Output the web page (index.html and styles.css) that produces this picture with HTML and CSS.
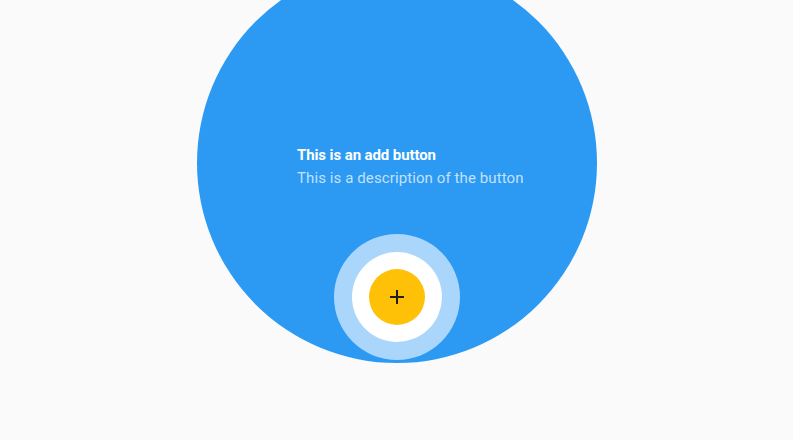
FILE: index.html
```html
<!DOCTYPE html>
<html>
<head>
<meta charset="utf-8">
<link rel="stylesheet" href="styles.css">
</head>
<body>
<div class="stage">
  <div class="backdrop"></div>
  <div class="content">
    <div class="title">This is an add button</div>
    <div class="desc">This is a description of the button</div>
  </div>
  <div class="ring"></div>
  <div class="halo"></div>
  <button class="fab" aria-label="Add">
    <svg width="14" height="14" viewBox="0 0 14 14"><path d="M7 0v14M0 7h14" stroke="#212121" stroke-width="2" fill="none"/></svg>
  </button>
</div>
</body>
</html>
```
FILE: styles.css
```css
html, body {
  margin: 0;
  padding: 0;
  background: #fafafa;
  font-family: Roboto, "Noto Sans", sans-serif;
}
.stage {
  position: relative;
  width: 793px;
  height: 440px;
  overflow: hidden;
}
.backdrop {
  position: absolute;
  left: 197px;
  top: -37px;
  width: 400px;
  height: 400px;
  border-radius: 50%;
  background: #2c9af3;
}
.content {
  position: absolute;
  left: 297px;
  top: 145px;
  display: flex;
  flex-direction: column;
  gap: 3px;
}
.title {
  color: #fff;
  font-size: 15px;
  font-weight: 700;
  line-height: 20px;
  letter-spacing: -0.1px;
}
.desc {
  color: rgba(255,255,255,0.72);
  font-size: 15px;
  line-height: 20px;
  letter-spacing: 0.1px;
}
.ring {
  position: absolute;
  left: 334px;
  top: 234px;
  width: 126px;
  height: 126px;
  border-radius: 50%;
  background: #aad6fb;
}
.halo {
  position: absolute;
  left: 352px;
  top: 252px;
  width: 90px;
  height: 90px;
  border-radius: 50%;
  background: #fff;
}
.fab {
  position: absolute;
  left: 369px;
  top: 269px;
  width: 56px;
  height: 56px;
  border-radius: 50%;
  border: none;
  padding: 0;
  background: #ffc107;
  display: flex;
  align-items: center;
  justify-content: center;
}
.fab svg { display: block; }
```
